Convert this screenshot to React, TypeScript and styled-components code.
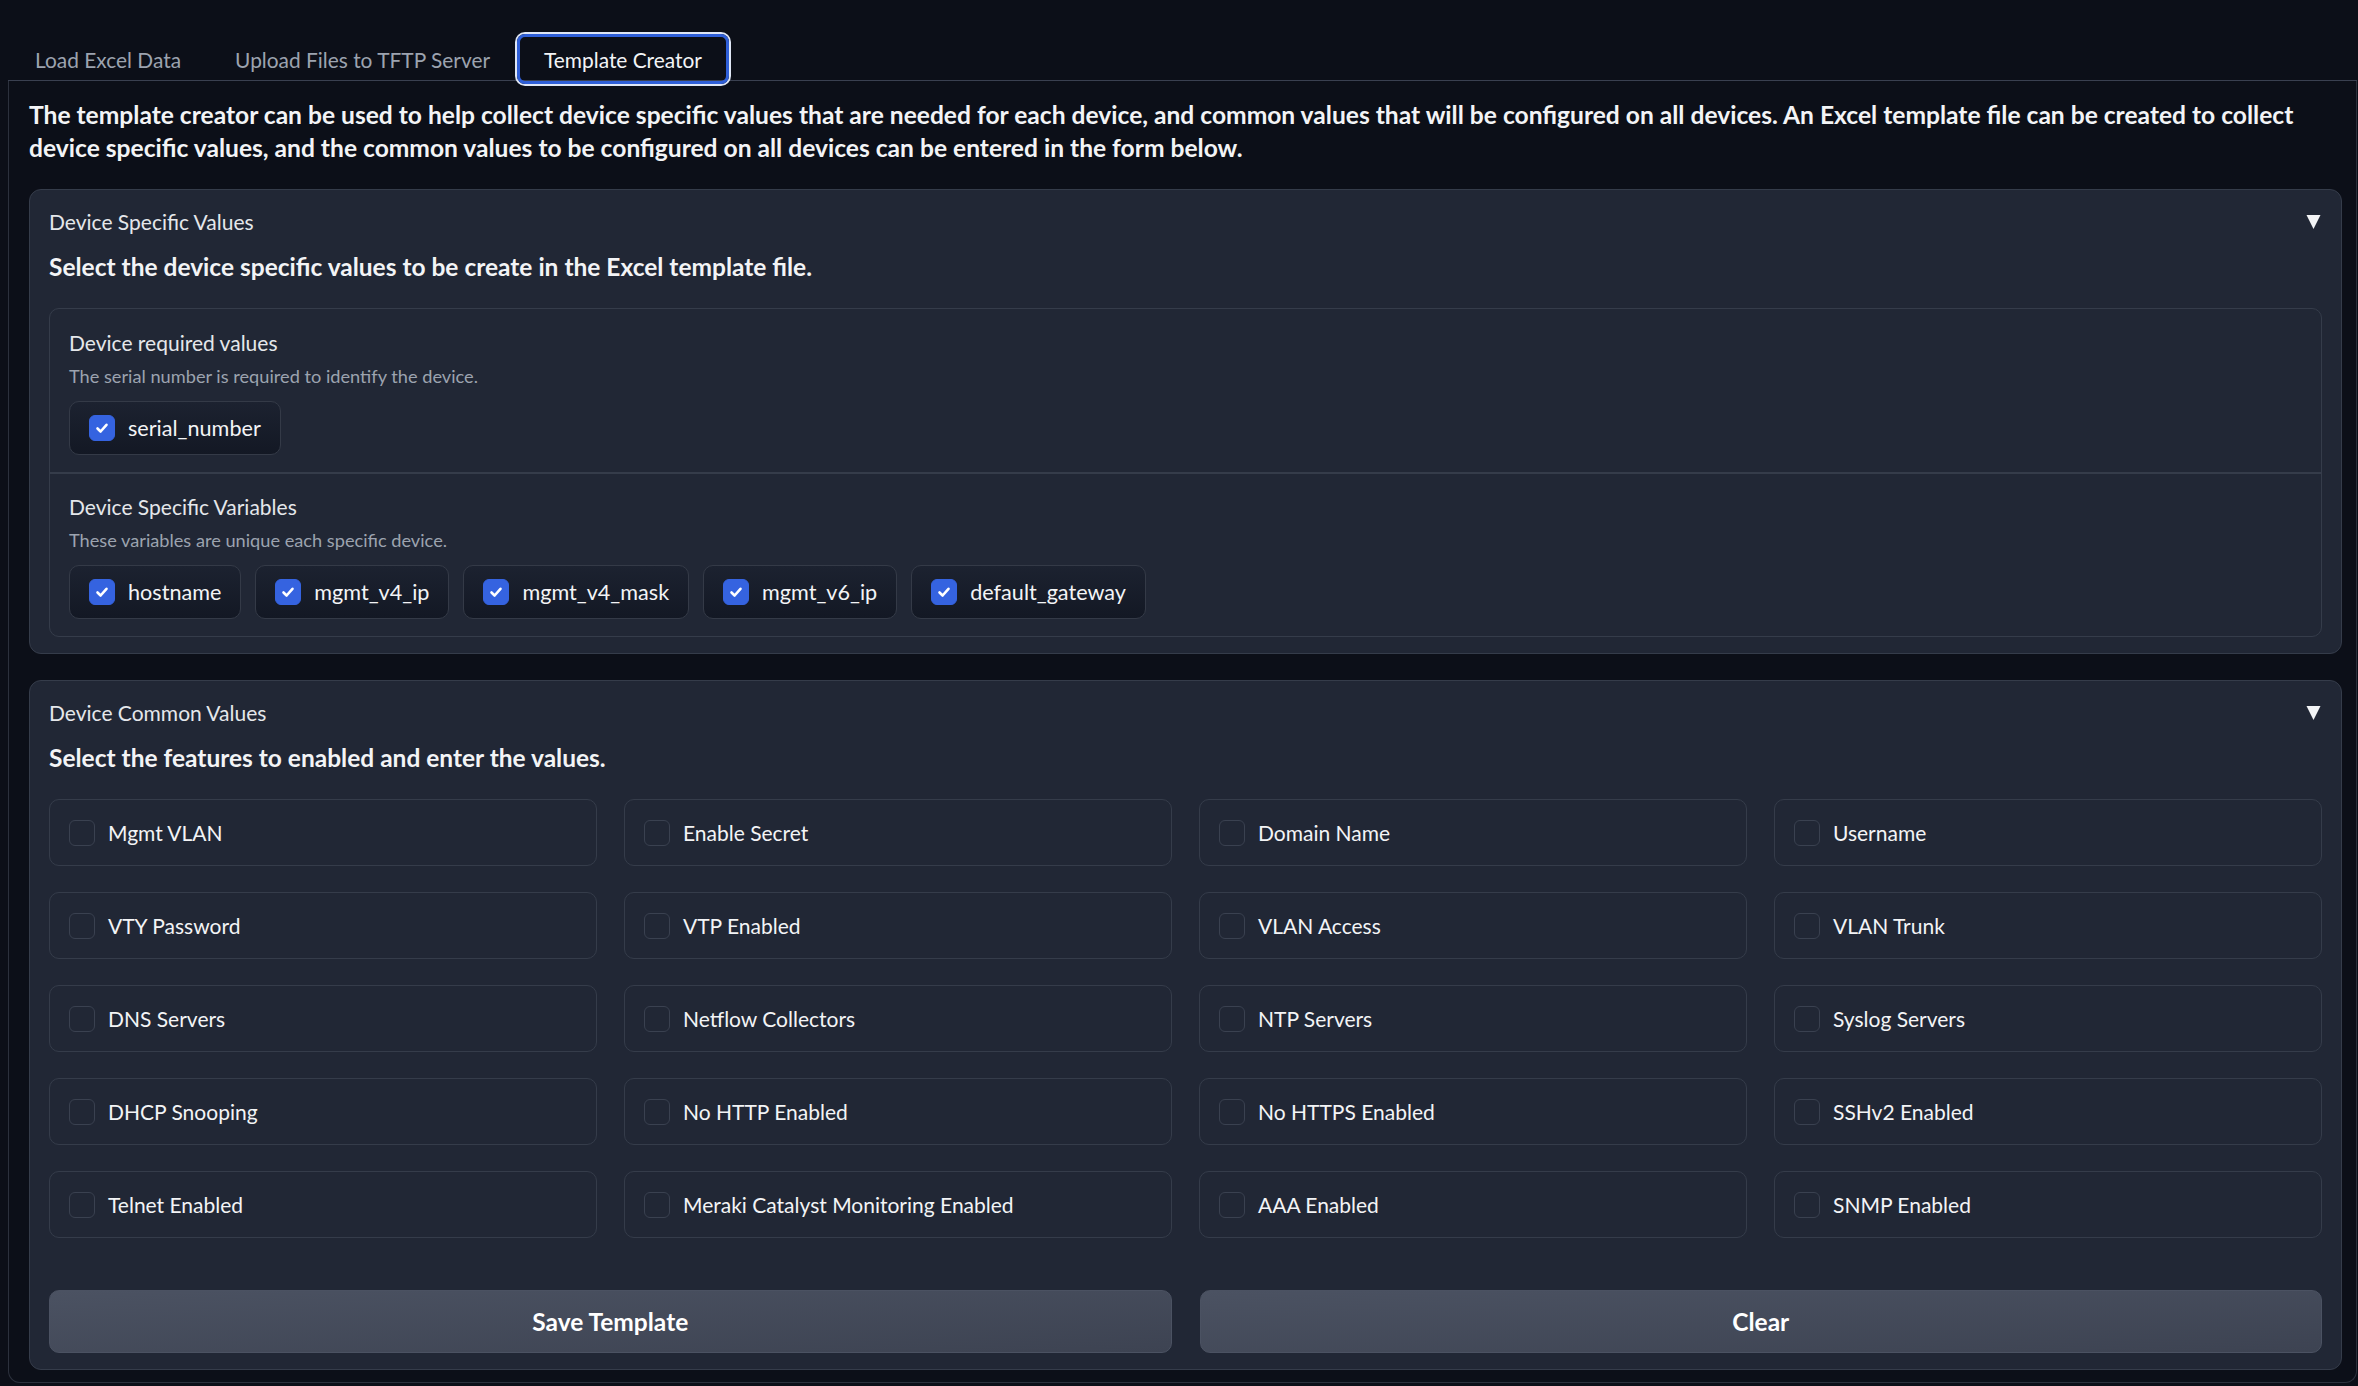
import React from "react";
import styled, { createGlobalStyle, css } from "styled-components";

const GlobalStyle = createGlobalStyle`
  html, body {
    margin: 0;
    padding: 0;
    background: #0c0f18;
  }
  body {
    font-family: Lato, "Open Sans", "Noto Sans", sans-serif;
    color: #f3f4f6;
    -webkit-font-smoothing: antialiased;
  }
  * { box-sizing: border-box; }
`;

const Page = styled.div`
  padding: 32px 1px 4px 8px;
  min-height: 1386px;
`;

const TabBar = styled.div`
  display: flex;
  align-items: flex-start;
  height: 49px;
  border-bottom: 1px solid #3a4050;
`;

const Tab = styled.button<{ $active?: boolean }>`
  height: 49px;
  padding: 5px 27px 0 27px;
  background: transparent;
  border: none;
  font-family: inherit;
  font-size: 20.9px;
  color: #9ca3af;
  cursor: pointer;
  white-space: nowrap;
  ${(p) =>
    p.$active &&
    css`
      height: 50px;
      margin-top: 2px;
      padding: 0 24px;
      color: #f3f4f6;
      border: 3px solid #2f5fd8;
      border-radius: 8px;
      box-shadow: 0 0 0 2px #dfe6f5;
      position: relative;
      z-index: 1;
    `}
`;

const TabPanel = styled.div`
  border: 1px solid #2c313d;
  border-top: none;
  border-radius: 0 0 12px 12px;
  padding: 17px 14px 12px 20px;
  display: flex;
  flex-direction: column;
  gap: 26px;
`;

const Intro = styled.p`
  margin: 0 0 -1px 0;
  font-size: 24.6px;
  font-weight: 700;
  line-height: 33px;
  color: #f3f4f6;
  white-space: nowrap;
`;

const Accordion = styled.section`
  background: #212735;
  border: 1px solid #353c4a;
  border-radius: 12px;
  padding: 17px 19px 16px 19px;
`;

const AccordionHeader = styled.div`
  display: flex;
  align-items: center;
  justify-content: space-between;
  height: 28px;
`;

const AccordionLabel = styled.span`
  font-size: 21px;
  color: #e5e7eb;
`;

const Caret = styled.svg`
  width: 15px;
  height: 15px;
  margin-right: 1px;
`;

const Subtitle = styled.h3`
  margin: 15px 0 25px 0;
  font-size: 24.5px;
  font-weight: 700;
  line-height: 33px;
  color: #f3f4f6;
`;

const Group = styled.div`
  border: 1px solid #353c4a;
  border-radius: 10px;
  display: flex;
  flex-direction: column;
`;

const Section = styled.div`
  padding: 20px 19px 17px 19px;
  & + & {
    border-top: 2px solid #353c4a;
    padding-top: 19px;
  }
`;

const SectionLabel = styled.div`
  font-size: 21px;
  line-height: 28px;
  color: #e5e7eb;
`;

const SectionInfo = styled.div`
  margin-top: 7px;
  font-size: 18.2px;
  line-height: 24px;
  color: #9ca3af;
`;

const ChipRow = styled.div`
  display: flex;
  flex-wrap: wrap;
  gap: 14px;
  margin-top: 13px;
`;

const Chip = styled.label`
  display: inline-flex;
  align-items: center;
  gap: 13px;
  height: 54px;
  padding: 0 19px 0 19px;
  border: 1px solid #343a47;
  border-radius: 10px;
  background: linear-gradient(180deg, #1c2230 0%, #131824 100%);
  font-size: 21.6px;
  color: #f3f4f6;
`;

const Box = styled.span<{ $checked?: boolean }>`
  flex: none;
  width: 26px;
  height: 26px;
  border-radius: 6px;
  display: inline-flex;
  align-items: center;
  justify-content: center;
  ${(p) =>
    p.$checked
      ? css`
          background: #3563e0;
          border: 1px solid #3563e0;
        `
      : css`
          background: #212735;
          border: 1px solid #3a4150;
        `}
`;

const FeatureGrid = styled.div`
  display: grid;
  grid-template-columns: repeat(4, 1fr);
  column-gap: 27px;
  row-gap: 26px;
`;

const Feature = styled.label`
  display: flex;
  align-items: center;
  gap: 13px;
  height: 67px;
  padding: 0 19px;
  border: 1px solid #353c4a;
  border-radius: 10px;
  font-size: 21px;
  color: #f3f4f6;
`;

const ButtonRow = styled.div`
  display: grid;
  grid-template-columns: 1fr 1fr;
  column-gap: 28px;
  margin-top: 52px;
`;

const Button = styled.button`
  height: 63px;
  border: 1px solid #4b5262;
  border-radius: 10px;
  background: linear-gradient(to bottom right, #4b5262, #3d4352);
  color: #ffffff;
  font-family: inherit;
  font-size: 24.5px;
  font-weight: 700;
  cursor: pointer;
`;

const Check = () => (
  <svg width="16" height="16" viewBox="0 0 16 16">
    <polyline
      points="3.5 8.5 6.6 11.5 12.5 4.8"
      fill="none"
      stroke="#ffffff"
      strokeWidth="2.6"
      strokeLinecap="round"
      strokeLinejoin="round"
    />
  </svg>
);

const CheckBox = ({ checked }: { checked?: boolean }) => (
  <Box $checked={checked}>{checked ? <Check /> : null}</Box>
);

const CaretIcon = () => (
  <Caret viewBox="0 0 15 15">
    <polygon points="0.5 1 14.5 1 7.5 15" fill="#f3f4f6" />
  </Caret>
);

const variables = ["hostname", "mgmt_v4_ip", "mgmt_v4_mask", "mgmt_v6_ip", "default_gateway"];

const features = [
  "Mgmt VLAN",
  "Enable Secret",
  "Domain Name",
  "Username",
  "VTY Password",
  "VTP Enabled",
  "VLAN Access",
  "VLAN Trunk",
  "DNS Servers",
  "Netflow Collectors",
  "NTP Servers",
  "Syslog Servers",
  "DHCP Snooping",
  "No HTTP Enabled",
  "No HTTPS Enabled",
  "SSHv2 Enabled",
  "Telnet Enabled",
  "Meraki Catalyst Monitoring Enabled",
  "AAA Enabled",
  "SNMP Enabled",
];

export default function App() {
  return (
    <>
      <GlobalStyle />
      <Page>
        <TabBar>
          <Tab>Load Excel Data</Tab>
          <Tab>Upload Files to TFTP Server</Tab>
          <Tab $active>Template Creator</Tab>
        </TabBar>
        <TabPanel>
          <Intro>
            The template creator can be used to help collect device specific values that are needed for each
            device, and common values that will be configured on all devices. An Excel template file can be created
            to collect
            <br />
            device specific values, and the common values to be configured on all devices can be entered in the form
            below.
          </Intro>

          <Accordion>
            <AccordionHeader>
              <AccordionLabel>Device Specific Values</AccordionLabel>
              <CaretIcon />
            </AccordionHeader>
            <Subtitle>Select the device specific values to be create in the Excel template file.</Subtitle>
            <Group>
              <Section>
                <SectionLabel>Device required values</SectionLabel>
                <SectionInfo>The serial number is required to identify the device.</SectionInfo>
                <ChipRow>
                  <Chip>
                    <CheckBox checked />
                    serial_number
                  </Chip>
                </ChipRow>
              </Section>
              <Section>
                <SectionLabel>Device Specific Variables</SectionLabel>
                <SectionInfo>These variables are unique each specific device.</SectionInfo>
                <ChipRow>
                  {variables.map((v) => (
                    <Chip key={v}>
                      <CheckBox checked />
                      {v}
                    </Chip>
                  ))}
                </ChipRow>
              </Section>
            </Group>
          </Accordion>

          <Accordion>
            <AccordionHeader>
              <AccordionLabel>Device Common Values</AccordionLabel>
              <CaretIcon />
            </AccordionHeader>
            <Subtitle>Select the features to enabled and enter the values.</Subtitle>
            <FeatureGrid>
              {features.map((f) => (
                <Feature key={f}>
                  <CheckBox />
                  {f}
                </Feature>
              ))}
            </FeatureGrid>
            <ButtonRow>
              <Button>Save Template</Button>
              <Button>Clear</Button>
            </ButtonRow>
          </Accordion>
        </TabPanel>
      </Page>
    </>
  );
}
